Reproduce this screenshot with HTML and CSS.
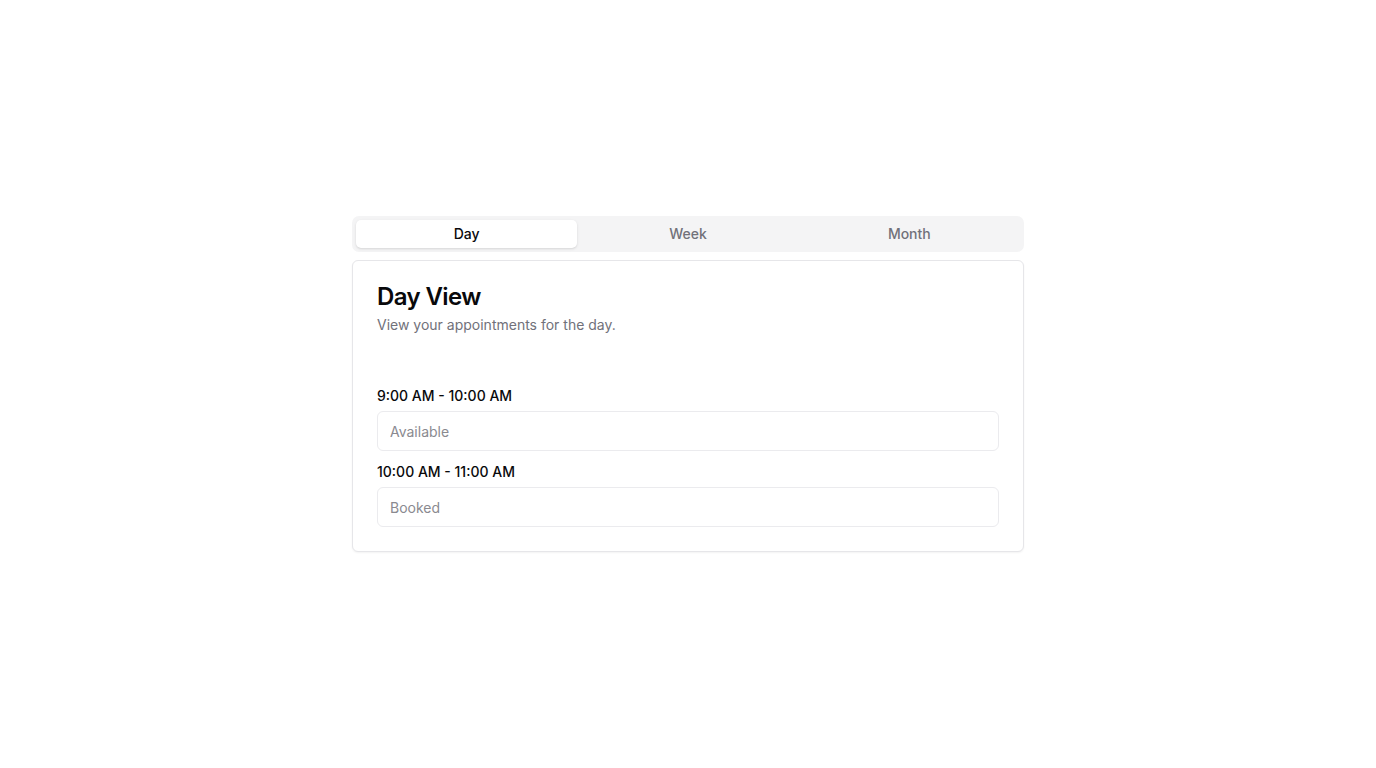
FILE: index.html
```html
<!DOCTYPE html>
<html lang="en">
<head>
<meta charset="utf-8">
<title>Day View</title>
<link rel="stylesheet" href="styles.css">
</head>
<body>
<main class="page">
  <div class="tabs">
    <div class="tab-list">
      <button class="tab active">Day</button>
      <button class="tab">Week</button>
      <button class="tab">Month</button>
    </div>
    <section class="card">
      <header class="card-header">
        <h2 class="card-title">Day View</h2>
        <p class="card-desc">View your appointments for the day.</p>
      </header>
      <div class="card-content">
        <div class="slot">
          <label class="slot-label" for="s1">9:00 AM - 10:00 AM</label>
          <input class="slot-input" id="s1" placeholder="Available">
        </div>
        <div class="slot">
          <label class="slot-label" for="s2">10:00 AM - 11:00 AM</label>
          <input class="slot-input" id="s2" placeholder="Booked">
        </div>
      </div>
    </section>
  </div>
</main>
</body>
</html>
```

FILE: styles.css
```css
* { box-sizing: border-box; }
html, body { margin: 0; padding: 0; }
body {
  font-family: Inter, "Noto Sans", sans-serif;
  color: #09090b;
  background: #ffffff;
}
.page {
  min-height: 768px;
  display: flex;
  align-items: center;
  justify-content: center;
}
.tabs {
  width: 672px;
  display: flex;
  flex-direction: column;
  gap: 8px;
}
.tab-list {
  height: 36px;
  padding: 4px;
  background: #f4f4f5;
  border-radius: 7px;
  display: grid;
  grid-template-columns: repeat(3, 1fr);
}
.tab {
  border: 0;
  background: transparent;
  font-family: inherit;
  font-size: 14px;
  line-height: 20px;
  font-weight: 500;
  color: #71717a;
  border-radius: 5px;
  padding: 4px 12px;
  height: 28px;
  cursor: pointer;
}
.tab.active {
  background: #ffffff;
  color: #09090b;
  box-shadow: 0 1px 3px rgba(0,0,0,0.1), 0 1px 2px -1px rgba(0,0,0,0.1);
}
.card {
  border: 1px solid #e6e6e9;
  border-radius: 6px;
  background: #fff;
  box-shadow: 0 1px 2px rgba(0,0,0,0.05);
}
.card-header {
  padding: 24px 24px 24px;
  display: flex;
  flex-direction: column;
  gap: 6px;
}
.card-title {
  margin: 0;
  font-size: 24px;
  line-height: 24px;
  font-weight: 600;
  letter-spacing: -0.6px;
}
.card-desc {
  margin: 0;
  font-size: 14px;
  line-height: 20px;
  color: #71717a;
}
.card-content {
  padding: 27px 24px 24px;
  display: flex;
  flex-direction: column;
  gap: 11px;
}
.slot {
  display: flex;
  flex-direction: column;
  gap: 5px;
}
.slot-label {
  font-size: 14px;
  line-height: 20px;
  font-weight: 500;
}
.slot-input {
  height: 40px;
  border: 1px solid #ebebee;
  border-radius: 6px;
  padding: 0 12px;
  font-family: inherit;
  font-size: 14px;
  color: #09090b;
  background: #fff;
  outline: none;
}
.slot-input::placeholder {
  color: #8a8a90;
}
```
